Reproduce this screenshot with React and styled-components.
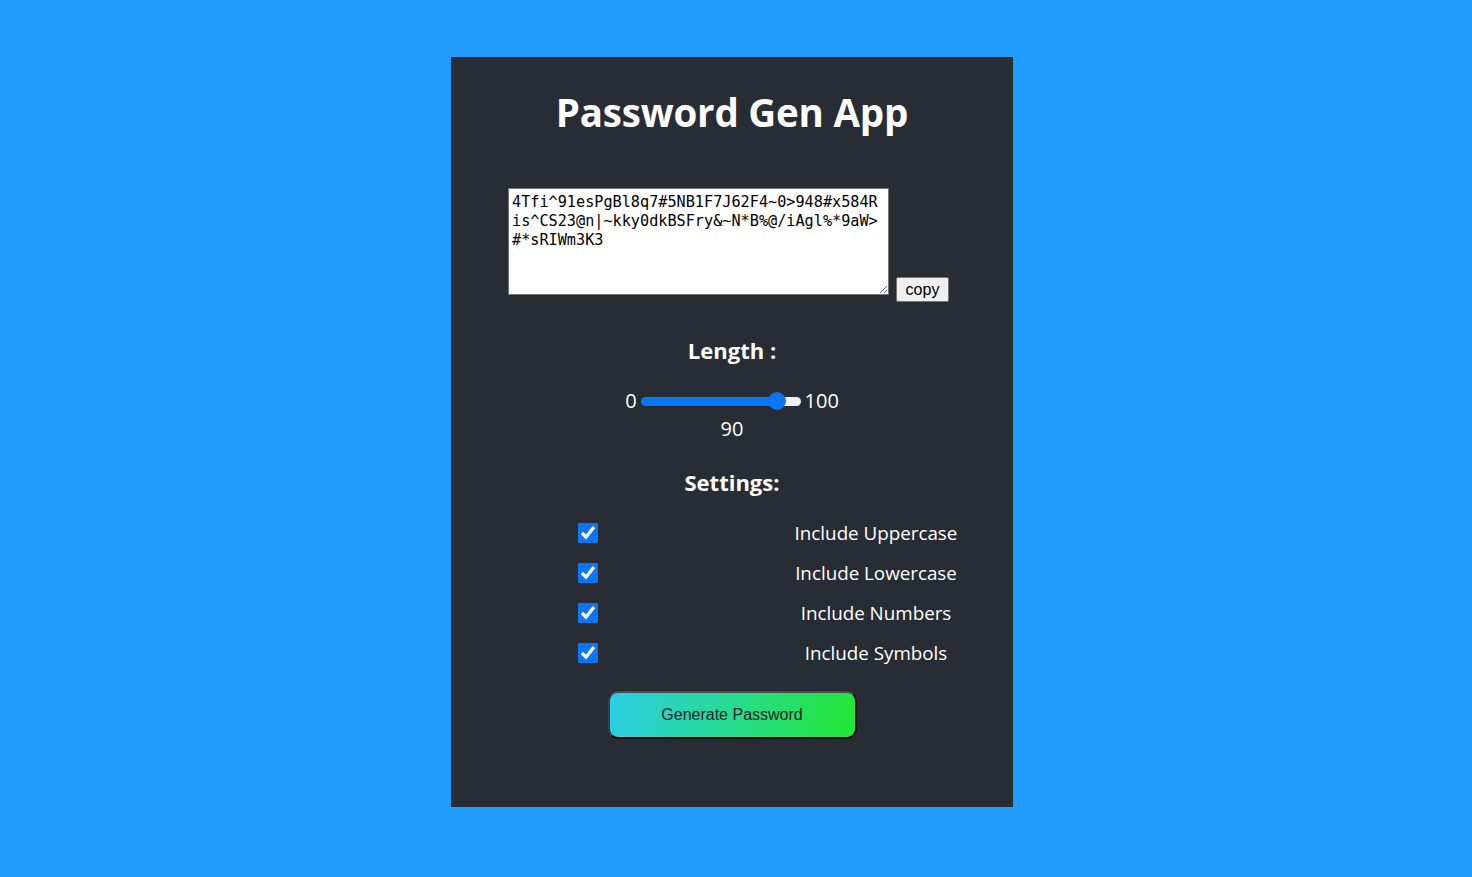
import React, { useState } from "react";
import styled, { createGlobalStyle } from "styled-components";

const Global = createGlobalStyle`
  html, body { margin: 0; padding: 0; }
  body {
    background: #209cff;
    min-height: 877px;
    font-family: "Open Sans", "Noto Sans", sans-serif;
  }
`;

const Page = styled.div`
  display: flex;
  justify-content: center;
  padding: 57px 8px 0 0;
`;

const Card = styled.div`
  width: 562px;
  background: #282c34;
  color: #fff;
  display: flex;
  flex-direction: column;
  align-items: center;
  padding: 33px 0 68px;
  box-sizing: border-box;
`;

const Title = styled.h1`
  margin: 0;
  font-size: 38.5px;
  line-height: 44px;
  font-weight: 700;
  letter-spacing: -0.2px;
`;

const OutputRow = styled.div`
  margin-top: 54px;
  display: flex;
  align-items: flex-end;
  gap: 7px;
  padding-right: 7px;
`;

const Output = styled.textarea`
  width: 381px;
  height: 107px;
  box-sizing: border-box;
  margin: 0 0 7px;
  padding: 4px 3px 2px;
  border: 1px solid #767676;
  background: #fff;
  color: #000;
  font-family: "DejaVu Sans Mono", "Liberation Mono", monospace;
  font-size: 15.2px;
  line-height: 19px;
  word-break: break-all;
  resize: both;
  outline: none;
`;

const CopyButton = styled.button`
  width: 53px;
  height: 25px;
  padding: 0;
  border: 1px solid #767676;
  border-radius: 2px;
  background: #efefef;
  color: #000;
  font-family: "Liberation Sans", Arial, sans-serif;
  font-size: 16px;
  line-height: 21px;
`;

const Heading = styled.h3`
  margin: ${(p) => p.$top}px 0 0;
  font-size: 22px;
  line-height: 30px;
  font-weight: 700;
`;

const SliderRow = styled.div`
  margin-top: 22px;
  display: flex;
  align-items: center;
  gap: 4px;
  font-size: 20px;
  line-height: 28px;
`;

const Range = styled.input`
  -webkit-appearance: none;
  appearance: none;
  width: 160px;
  height: 9px;
  margin: 0;
  border-radius: 5px;
  outline: none;
  &::-webkit-slider-thumb {
    -webkit-appearance: none;
    appearance: none;
    width: 18px;
    height: 18px;
    border-radius: 50%;
    background: #0a75f5;
    border: none;
  }
`;

const Value = styled.div`
  font-size: 20px;
  line-height: 28px;
`;

const Options = styled.div`
  margin-top: 16px;
  display: flex;
  flex-direction: column;
`;

const OptionRow = styled.label`
  width: 576px;
  height: 40px;
  display: grid;
  grid-template-columns: 1fr 1fr;
  align-items: center;
  justify-items: center;
`;

const Check = styled.input`
  width: 20px;
  height: 20px;
  margin: 0;
  accent-color: #0a75f5;
`;

const OptionText = styled.span`
  font-size: 18.8px;
  line-height: 28px;
`;

const GenerateButton = styled.button`
  margin-top: 18px;
  width: 249px;
  height: 48px;
  border-radius: 10px;
  border: 2px solid;
  border-color: #4a4d52 #111 #000 #3a3d42;
  background: linear-gradient(100deg, #2bcde6 0%, #27dc90 50%, #22e632 100%);
  color: #15202b;
  font-family: "Liberation Sans", Arial, sans-serif;
  font-size: 16px;
  cursor: pointer;
`;

const options = [
  "Include Uppercase",
  "Include Lowercase",
  "Include Numbers",
  "Include Symbols",
];

export default function App() {
  const [length, setLength] = useState(90);
  const [checks, setChecks] = useState([true, true, true, true]);
  const pct = ((length / 100) * (160 - 18) + 9) / 160 * 100;
  return (
    <Page>
      <Global />
      <Card>
        <Title>Password Gen App</Title>
        <OutputRow>
          <Output
            readOnly
            value={"4Tfi^91esPgBl8q7#5NB1F7J62F4~0>948#x584Ris^CS23@n|~kky0dkBSFry&~N*B%@/iAgl%*9aW>#*sRIWm3K3"}
          />
          <CopyButton>copy</CopyButton>
        </OutputRow>
        <Heading $top={33}>Length :</Heading>
        <SliderRow>
          <span>0</span>
          <Range
            type="range"
            min="0"
            max="100"
            value={length}
            onChange={(e) => setLength(Number(e.target.value))}
            style={{
              background: `linear-gradient(to right, #0a75f5 0 ${pct}%, #efefef ${pct}% 100%)`,
            }}
          />
          <span>100</span>
        </SliderRow>
        <Value>{length}</Value>
        <Heading $top={24}>Settings:</Heading>
        <Options>
          {options.map((o, i) => (
            <OptionRow key={o}>
              <Check
                type="checkbox"
                checked={checks[i]}
                onChange={() =>
                  setChecks((c) => c.map((v, j) => (j === i ? !v : v)))
                }
              />
              <OptionText>{o}</OptionText>
            </OptionRow>
          ))}
        </Options>
        <GenerateButton>Generate Password</GenerateButton>
      </Card>
    </Page>
  );
}
